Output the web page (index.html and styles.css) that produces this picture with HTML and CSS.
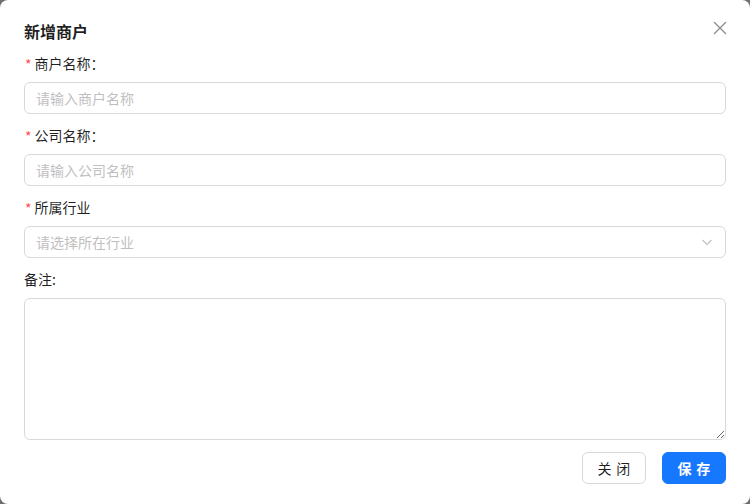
FILE: index.html
```html
<!DOCTYPE html>
<html lang="zh-CN">
<head>
    <meta charset="UTF-8">
    <meta name="viewport" content="width=device-width, initial-scale=1.0">
    <title>新增商户</title>
    <link rel="stylesheet" href="styles.css">
</head>
<body>
    <div class="modal">
        <div class="modal-header">
            <h2 class="modal-title">新增商户</h2>
            <button class="modal-close" type="button" aria-label="close">
                <svg width="16" height="16" viewBox="0 0 16 16" fill="none" stroke="#8c8c8c" stroke-width="1.3" stroke-linecap="round">
                    <path d="M2.5 2.5l11 11M13.5 2.5l-11 11"/>
                </svg>
            </button>
        </div>
        <form class="merchant-form">
            <label class="form-label required" for="name">商户名称：</label>
            <input class="form-input" type="text" id="name" placeholder="请输入商户名称">

            <label class="form-label required" for="company">公司名称：</label>
            <input class="form-input" type="text" id="company" placeholder="请输入公司名称">

            <label class="form-label required" for="industry">所属行业</label>
            <div class="form-select" id="industry">
                <span class="select-placeholder">请选择所在行业</span>
                <svg width="12" height="12" viewBox="0 0 12 12" fill="none" stroke="#bfbfbf" stroke-width="1.1">
                    <path d="M1.5 4l4.5 4.5L10.5 4"/>
                </svg>
            </div>

            <label class="form-label" for="remark">备注:</label>
            <textarea class="form-textarea" id="remark"></textarea>

            <div class="modal-footer">
                <button type="button" class="btn">关闭</button>
                <button type="submit" class="btn btn-primary">保存</button>
            </div>
        </form>
    </div>
</body>
</html>
```

FILE: styles.css
```css
body {
    margin: 0;
    padding: 0;
    background-color: #6e6e6e;
    font-family: "Noto Sans CJK SC", "Noto Sans", sans-serif;
    font-size: 14px;
    color: rgba(0, 0, 0, 0.88);
}
.modal {
    width: 750px;
    height: 504px;
    box-sizing: border-box;
    padding: 20px 24px;
    background: #ffffff;
    border-radius: 8px;
}
.modal-header {
    display: flex;
    justify-content: space-between;
    align-items: flex-start;
    margin-bottom: 10px;
}
.modal-title {
    margin: 0;
    font-size: 16px;
    font-weight: 600;
    line-height: 22px;
}
.modal-close {
    border: none;
    background: none;
    padding: 0;
    width: 22px;
    height: 22px;
    margin-top: -3px;
    margin-right: -5px;
    display: flex;
    align-items: center;
    justify-content: center;
    cursor: pointer;
}
.merchant-form {
    display: flex;
    flex-direction: column;
}
.form-label {
    height: 22px;
    line-height: 22px;
    margin-bottom: 8px;
    display: flex;
    align-items: center;
    text-spacing-trim: space-all;
}
.form-label.required::before {
    content: "*";
    color: #ff4d4f;
    font-size: 14px;
    line-height: 1;
    margin-right: 3px;
    margin-left: 1px;
    padding-top: 2px;
}
.form-input,
.form-select,
.form-textarea {
    box-sizing: border-box;
    border: 1px solid #d9d9d9;
    border-radius: 6px;
    font-family: inherit;
    font-size: 14px;
    margin-bottom: 10px;
}
.form-input {
    height: 32px;
    padding: 4px 11px;
    outline: none;
}
.form-input::placeholder {
    color: #bfbfbf;
}
.form-select {
    height: 32px;
    padding: 0 12px 0 11px;
    display: flex;
    align-items: center;
    justify-content: space-between;
}
.select-placeholder {
    color: #bfbfbf;
}
.form-textarea {
    height: 142px;
    padding: 4px 11px;
    resize: vertical;
    margin-bottom: 12px;
}
.modal-footer {
    display: flex;
    justify-content: flex-end;
    gap: 16px;
}
.btn {
    width: 64px;
    height: 32px;
    border: 1px solid #d9d9d9;
    border-radius: 6px;
    background: #ffffff;
    font-family: inherit;
    font-size: 14px;
    color: rgba(0, 0, 0, 0.88);
    letter-spacing: 0.34em;
    padding: 0 0 0 0.34em;
    cursor: pointer;
}
.btn-primary {
    background: #1677ff;
    border-color: #1677ff;
    color: #ffffff;
    font-weight: 600;
}
```
